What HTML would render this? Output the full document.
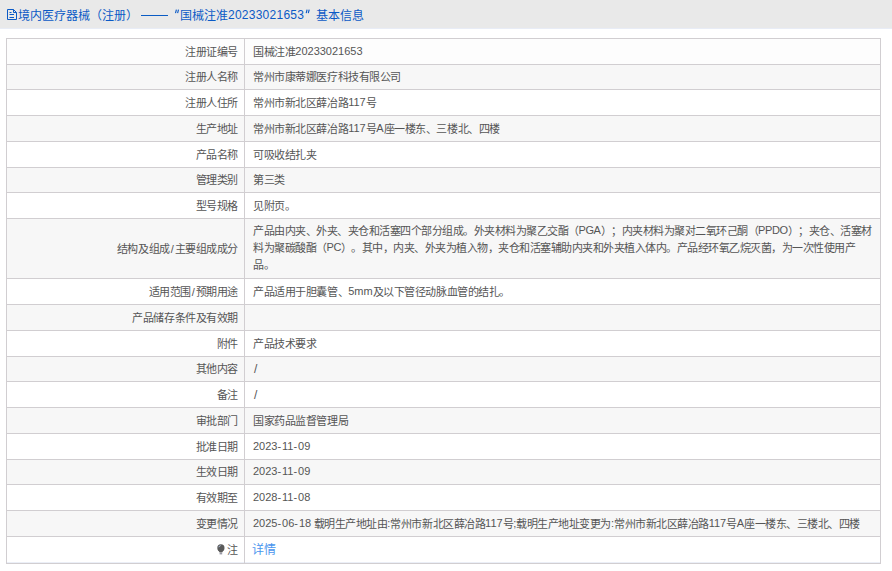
<!DOCTYPE html>
<html lang="zh-CN">
<head>
<meta charset="utf-8">
<style>
html,body{margin:0;padding:0;background:#fff;}
body{text-spacing-trim:space-all;width:892px;height:571px;overflow:hidden;position:relative;font-family:"Liberation Sans",sans-serif;}
.hd{position:absolute;left:0;top:0;width:892px;height:28px;background:#e9e9e9;border-bottom:1px solid #e8ecf6;}
.hd .t{position:absolute;top:2px;height:28px;line-height:28px;font-size:12px;color:#0b5ac6;white-space:nowrap;}
.hd .dash{letter-spacing:0.9px;top:1px;}
.hd .hn{letter-spacing:0.25px;top:1px;}
.hd svg{position:absolute;left:6px;top:8px;}
.hd svg.q{position:absolute;}
.row{position:absolute;left:6px;width:875px;box-sizing:border-box;border:1px solid #d1ced1;font-size:11px;letter-spacing:-0.43px;color:#555;}
.lab{position:absolute;left:0;top:0;bottom:0;width:231px;border-right:1px solid #d1ced1;display:flex;align-items:center;justify-content:flex-end;padding-right:6px;padding-bottom:0px;box-sizing:content-box;white-space:nowrap;}
.val{position:absolute;left:238px;right:0;top:0;bottom:0;display:flex;align-items:center;padding:0 8px 0px 8px;white-space:nowrap;}
.val.m{line-height:17.14px;padding-bottom:0;}
.n{letter-spacing:-0.1px;position:relative;top:-1px;}
.lnk{color:#4a95ee;}
.pin{position:absolute;left:210px;top:6.5px;z-index:2;}
.l1{letter-spacing:-0.5px;}
.l2{letter-spacing:-0.5px;}
.n.c{letter-spacing:-0.4px;}
.lab>div,.val>div{line-height:16px;}
.val.m>div{line-height:17.14px;}
.n{top:-1px;letter-spacing:0;}
.hy{letter-spacing:0.9px;}
.sl{letter-spacing:0;margin:0 0.8px 0 1px;}
.vsl{font-size:12px;letter-spacing:0;margin-left:1px;position:relative;top:0px;}
.lnk{font-size:12px;letter-spacing:-0.5px;position:relative;top:-0.5px;left:-1px;}
.val.chg>div{letter-spacing:-0.48px;}
</style>
</head>
<body>
<div class="hd"><svg width="12" height="13" viewBox="0 0 12 13"><path d="M1.5 1.5H7.5L10.5 4.5V11.5H1.5Z" fill="none" stroke="#0b5ac6" stroke-width="1"/><path d="M7.5 1.5V4.5H10.5M3.5 4.5H5.5M3.5 6.5H8M3.5 9.5H8" fill="none" stroke="#0b5ac6" stroke-width="1"/></svg><span class="t" style="left:18px">境内医疗器械（注册）</span><div style="position:absolute;left:141px;top:15px;width:27px;height:1px;background:#0b5cc4"></div><svg class="q" style="left:174px;top:9px" width="6" height="5" viewBox="0 0 6 5"><path d="M2.4 0.6L1.5 4.2M4.5 0.6L3.6 4.2" stroke="#0b5ac6" stroke-width="1.15" fill="none"/></svg><span class="t" style="left:180px">国械注准</span><span class="t hn" style="left:228px">20233021653</span><svg class="q" style="left:305px;top:9px" width="6" height="5" viewBox="0 0 6 5"><path d="M2.1 0.6L1.2 4.2M4.2 0.6L3.3 4.2" stroke="#0b5ac6" stroke-width="1.15" fill="none"/></svg><span class="t" style="left:316px">基本信息</span></div>
<div class="row" style="top:38px;height:27px;background:#fdfdfd"><div class="lab"><div>注册证编号</div></div><div class="val"><div>国械注准<span class="n">20233021653</span></div></div></div>
<div class="row" style="top:64px;height:26px;background:#f7f7f7"><div class="lab"><div>注册人名称</div></div><div class="val"><div>常州市康蒂娜医疗科技有限公司</div></div></div>
<div class="row" style="top:89px;height:27px;background:#fff"><div class="lab"><div>注册人住所</div></div><div class="val"><div>常州市新北区薛冶路<span class="n">117</span>号</div></div></div>
<div class="row" style="top:115px;height:27px;background:#f7f7f7"><div class="lab"><div>生产地址</div></div><div class="val"><div>常州市新北区薛冶路<span class="n">117</span>号<span class="n">A</span>座一楼东、三楼北、四楼</div></div></div>
<div class="row" style="top:141px;height:27px;background:#fff"><div class="lab"><div>产品名称</div></div><div class="val"><div>可吸收结扎夹</div></div></div>
<div class="row" style="top:167px;height:26px;background:#f7f7f7"><div class="lab"><div>管理类别</div></div><div class="val"><div>第三类</div></div></div>
<div class="row" style="top:192px;height:27px;background:#fff"><div class="lab"><div>型号规格</div></div><div class="val"><div>见附页。</div></div></div>
<div class="row" style="top:218px;height:61px;background:#f7f7f7"><div class="lab"><div>结构及组成<span class="sl">/</span>主要组成成分</div></div><div class="val m"><div><span class="l1">产品由内夹、外夹、夹仓和活塞四个部分组成。外夹材料为聚乙交酯（<span class="n c">PGA</span>）；内夹材料为聚对二氧环己酮（<span class="n c">PPDO</span>）；夹仓、活塞材</span><br><span class="l2">料为聚碳酸酯（<span class="n c">PC</span>）。其中，内夹、外夹为植入物，夹仓和活塞辅助内夹和外夹植入体内。产品经环氧乙烷灭菌，为一次性使用产</span><br>品。</div></div></div>
<div class="row" style="top:278px;height:27px;background:#fff"><div class="lab"><div>适用范围<span class="sl">/</span>预期用途</div></div><div class="val"><div>产品适用于胆囊管、<span class="n">5mm</span>及以下管径动脉血管的结扎。</div></div></div>
<div class="row" style="top:304px;height:27px;background:#f7f7f7"><div class="lab"><div>产品储存条件及有效期</div></div><div class="val"><div></div></div></div>
<div class="row" style="top:330px;height:27px;background:#fff"><div class="lab"><div>附件</div></div><div class="val"><div>产品技术要求</div></div></div>
<div class="row" style="top:356px;height:26px;background:#f7f7f7"><div class="lab"><div>其他内容</div></div><div class="val"><div><span class="vsl">/</span></div></div></div>
<div class="row" style="top:381px;height:27px;background:#fff"><div class="lab"><div>备注</div></div><div class="val"><div><span class="vsl">/</span></div></div></div>
<div class="row" style="top:407px;height:27px;background:#f7f7f7"><div class="lab"><div>审批部门</div></div><div class="val"><div>国家药品监督管理局</div></div></div>
<div class="row" style="top:433px;height:27px;background:#fff"><div class="lab"><div>批准日期</div></div><div class="val"><div><span class="n">2023<span class="hy">-</span>11<span class="hy">-</span>09</span></div></div></div>
<div class="row" style="top:459px;height:26px;background:#f7f7f7"><div class="lab"><div>生效日期</div></div><div class="val"><div><span class="n">2023<span class="hy">-</span>11<span class="hy">-</span>09</span></div></div></div>
<div class="row" style="top:484px;height:27px;background:#fff"><div class="lab"><div>有效期至</div></div><div class="val"><div><span class="n">2028<span class="hy">-</span>11<span class="hy">-</span>08</span></div></div></div>
<div class="row" style="top:510px;height:27px;background:#f7f7f7"><div class="lab"><div>变更情况</div></div><div class="val chg"><div><span class="n">2025<span class="hy">-</span>06<span class="hy">-</span>18</span> 载明生产地址由<span class="n">:</span>常州市新北区薛冶路<span class="n">117</span>号<span class="n">;</span>载明生产地址变更为<span class="n">:</span>常州市新北区薛冶路<span class="n">117</span>号<span class="n">A</span>座一楼东、三楼北、四楼</div></div></div>
<div class="row" style="top:536px;height:28px;background:#fff;box-shadow:inset 0 -1px 0 #ebeff7"><svg class="pin" width="9" height="11" viewBox="0 0 9 11"><circle cx="3.9" cy="3.9" r="3.6" fill="#5a5a5a"/><path d="M1.3 5.8L2.6 8.6H5.2L6.5 5.8Z" fill="#5a5a5a"/><rect x="2.6" y="8.9" width="2.6" height="1.5" fill="#9a9aa8"/><path d="M1.8 3.2A2.2 2.2 0 0 1 3.6 1.6" stroke="#b8c8e8" stroke-width="0.9" fill="none"/></svg><div class="lab"><div>注</div></div><div class="val"><div><span class="lnk">详情</span></div></div></div>
</body>
</html>
